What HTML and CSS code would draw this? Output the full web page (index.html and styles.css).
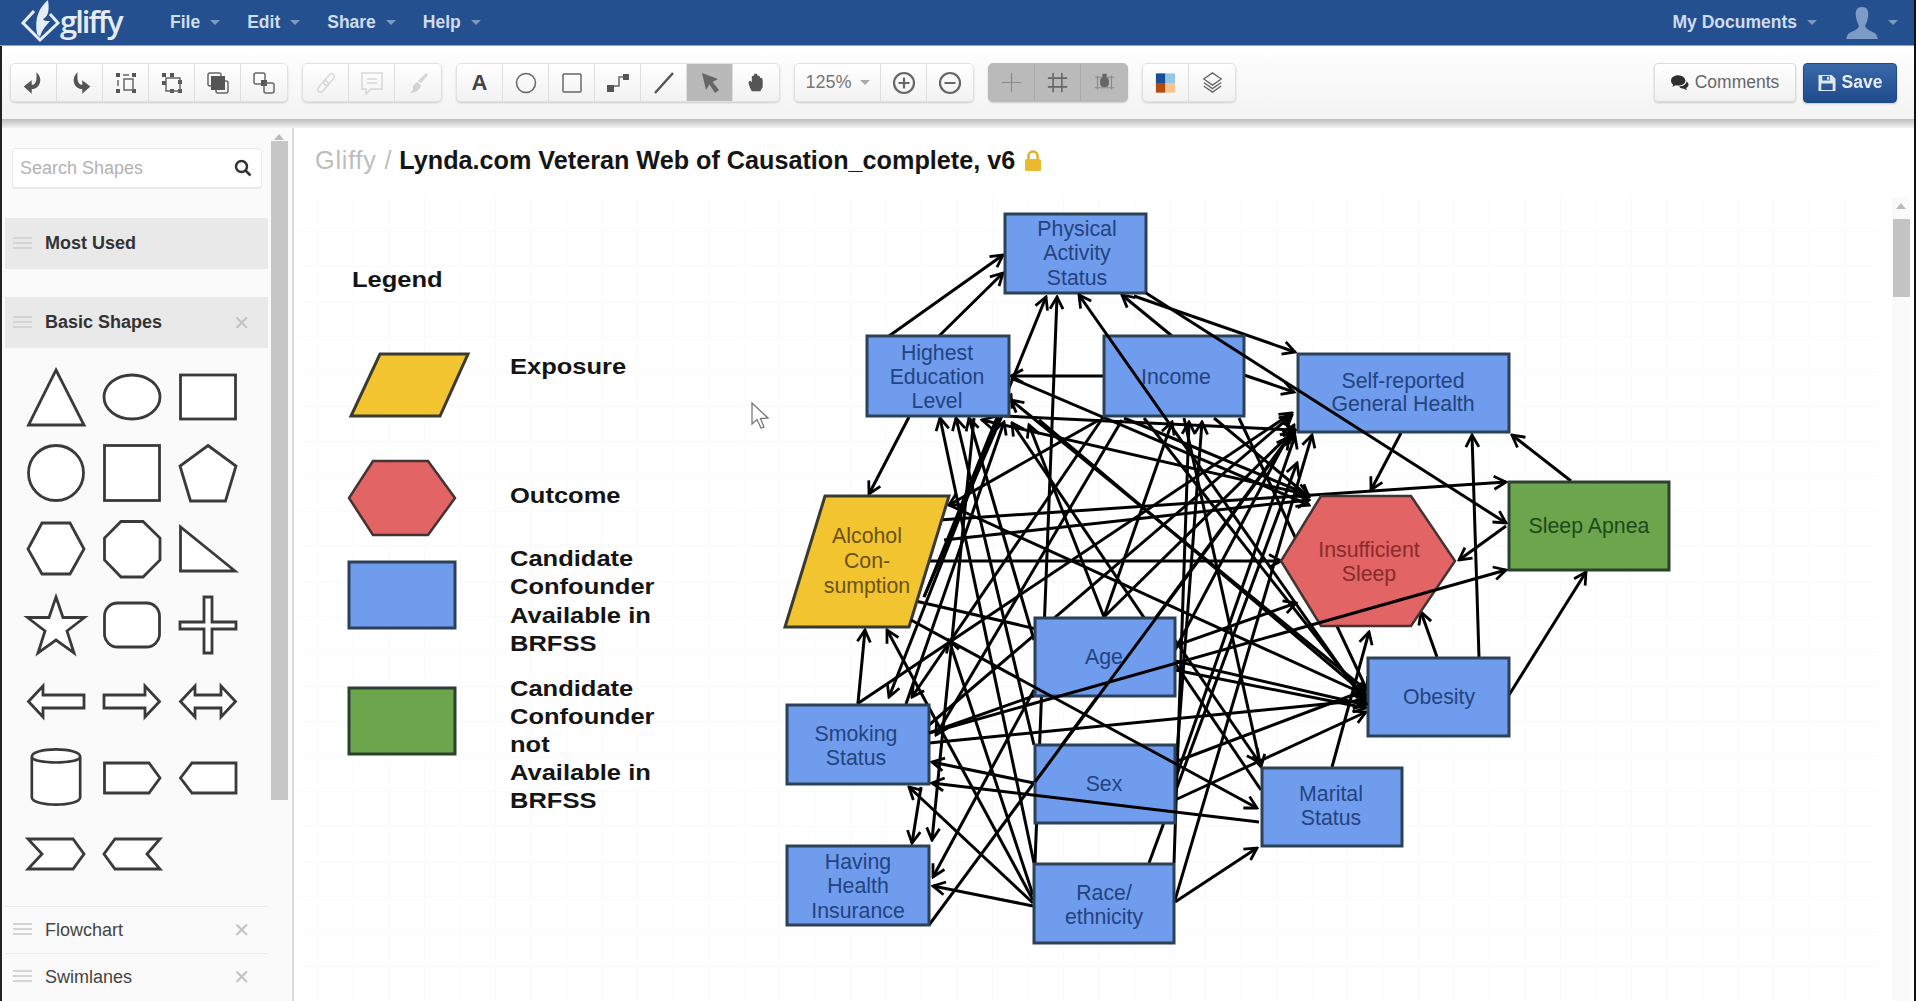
FILE: index.html
```html
<!DOCTYPE html>
<html lang="en">
<head>
<meta charset="utf-8">
<title>Gliffy</title>
<link rel="stylesheet" href="styles.css">
</head>
<body>
<div class="app">
  <header class="topbar">
    <a class="logo">
      <svg class="logo-mark" viewBox="0 0 42 44"><path class="logo-line" d="M14 12 L3 24 L20 41 L38 24 L30 15"/><path class="logo-fill" d="M28 1 C20 8 14 18 17 35 L20 38 C22 30 27 26 30 22 C26 22 24 22 23 20 C27 18 30 14 28 1Z"/></svg>
      <span class="logo-text">gliffy</span>
    </a>
    <nav class="menu">
      <span class="menu-item">File<i class="caret"></i></span>
      <span class="menu-item">Edit<i class="caret"></i></span>
      <span class="menu-item">Share<i class="caret"></i></span>
      <span class="menu-item">Help<i class="caret"></i></span>
    </nav>
    <div class="account">
      <span class="menu-item">My Documents<i class="caret"></i></span>
      <span class="avatar-wrap">
        <svg class="avatar" viewBox="0 0 32 34"><path d="M16 1 C10 1 9 6 10 11 C10.500 15 12 18 13 20 C12 24 6 25 2 28 L0 33 L32 33 L30 28 C26 25 20 24 19 20 C20 18 21.500 15 22 11 C23 6 22 1 16 1Z"/></svg>
        <i class="caret"></i>
      </span>
    </div>
  </header>

  <div class="toolbar">
    <div class="group">
      <button class="tool"><svg class="ic" viewBox="2 2 20 21"><path class="solid" d="M14 3 C18 6 19 12 15 16 C14 17 12 18 10 18 L10 22 L3 15.500 L10 10 L10 14 C13 14 15 11 14 3Z"/></svg></button>
      <button class="tool"><svg class="ic" viewBox="2 2 20 21"><path class="solid" d="M10 3 C6 6 5 12 9 16 C10 17 12 18 14 18 L14 22 L21 15.500 L14 10 L14 14 C11 14 9 11 10 3Z"/></svg></button>
      <button class="tool"><svg class="ic" viewBox="0 0 24 24"><path class="solid" d="M2 2h4v4H2zM18 2h4v4h-4zM2 18h4v4H2zM18 18h4v4h-4z"/><path class="thin" d="M9 4h6M4 9v6M10 8h9v11h-9z"/></svg></button>
      <button class="tool"><svg class="ic" viewBox="0 0 24 24"><path class="solid" d="M2 2h4v4H2zM10 2h4v4h-4zM2 10h4v4H2zM18 9h4v4h-4zM10 18h4v4h-4zM18 18h4v4h-4z"/><path class="thin" d="M6 7h14v13H6z"/></svg></button>
      <button class="tool"><svg class="ic" viewBox="0 0 24 24"><rect class="thin" x="2" y="2" width="13" height="13" rx="2"/><rect class="thin" x="10" y="10" width="12" height="12" rx="2"/><rect class="solid" x="5" y="5" width="14" height="14"/></svg></button>
      <button class="tool"><svg class="ic" viewBox="0 0 24 24"><rect class="thin" x="2" y="2" width="11" height="11" rx="2"/><rect class="solid" x="9" y="9" width="6" height="6"/><rect class="thin" x="12" y="12" width="10" height="10" rx="2"/></svg></button>
    </div>
    <div class="group">
      <button class="tool"><svg class="ic off" viewBox="0 0 24 24"><path class="thin" d="M4 17 L10 10 A3 3 0 0 1 14 14 L8 21 A3 3 0 0 1 4 17ZM20 7 L14 14 A3 3 0 0 1 10 10 L16 3 A3 3 0 0 1 20 7Z"/></svg></button>
      <button class="tool"><svg class="ic off" viewBox="0 0 24 24"><path class="thin" d="M2 2h20v16H11l-5 5v-5H2zM7 8h10M7 12h10"/></svg></button>
      <button class="tool"><svg class="ic off" viewBox="0 0 24 24"><path class="solid" d="M20 2l2 2-7 8-3-2zM11 11l4 3c-1 4-4 8-11 8 3-2 3-4 3-7z"/></svg></button>
    </div>
    <div class="group">
      <button class="tool tool-a">A</button>
      <button class="tool"><svg class="ic" viewBox="0 0 24 24"><circle class="thin" cx="12" cy="12" r="9.500"/></svg></button>
      <button class="tool"><svg class="ic" viewBox="0 0 24 24"><rect class="thin" x="3" y="3" width="18" height="18" rx="1"/></svg></button>
      <button class="tool"><svg class="ic" viewBox="0 0 24 24"><path class="solid" d="M1 14h7v7H1zM17 3h6v6h-6z"/><path class="thin" d="M8 15h5V6h4"/></svg></button>
      <button class="tool"><svg class="ic" viewBox="0 0 24 24"><path class="heavy" d="M3 22 L21 2"/></svg></button>
      <button class="tool tool-on"><svg class="ic" viewBox="0 0 24 24"><path class="cursor-ic" d="M4 2 L20 8 L14.500 11 L21 19 L17 22 L11.500 13.500 L8 19Z"/></svg></button>
      <button class="tool"><svg class="ic ic-hand" viewBox="0 0 24 24"><path class="solid" d="M7 22 C5 18 3 14 3 11 L5 9 L7 11 L7 4 L9.500 3 L10 1 L13 1 L14 3 L16.500 4 L17 6 L19 6 L20 8 L20 17 L17 22Z"/></svg></button>
    </div>
    <div class="group">
      <button class="tool tool-zoom">125%<i class="caret caret-gray"></i></button>
      <button class="tool"><svg class="ic" viewBox="0 0 24 24"><circle class="mid" cx="12" cy="12" r="10"/><path class="mid" d="M6.500 12h11M12 6.500v11"/></svg></button>
      <button class="tool"><svg class="ic" viewBox="0 0 24 24"><circle class="mid" cx="12" cy="12" r="10"/><path class="mid" d="M6.500 12h11"/></svg></button>
    </div>
    <div class="group group-on">
      <button class="tool"><svg class="ic ic-snap" viewBox="0 0 24 24"><path class="snap" d="M12 1v22M1 12h22"/></svg></button>
      <button class="tool"><svg class="ic ic-snap" viewBox="0 0 24 24"><path class="snap-dark" d="M7 1v22M17 1v22M1 7h22M1 17h22"/></svg></button>
      <button class="tool"><svg class="ic ic-snap" viewBox="0 0 24 24"><path class="snap" d="M4 4v16M20 4v16M1 6h22M1 18h22"/><rect class="snap-fill" x="7" y="6" width="10" height="11" rx="4"/><rect class="snap-fill" x="9.500" y="2" width="5" height="4"/></svg></button>
    </div>
    <div class="group">
      <button class="tool"><svg class="ic ic-color" viewBox="0 0 24 24"><rect class="c1" x="1" y="1" width="11" height="11"/><rect class="c2" x="12" y="1" width="11" height="11"/><rect class="c3" x="1" y="12" width="11" height="11"/><rect class="c4" x="12" y="12" width="11" height="11"/></svg></button>
      <button class="tool"><svg class="ic ic-layers" viewBox="0 0 24 24"><path class="thin" d="M12 1 L22 8 L12 15 L2 8Z M2 12 L12 19 L22 12 M2 16 L12 23 L22 16"/></svg></button>
    </div>
    <div class="actions">
      <button class="btn">
        <svg class="btn-ic" viewBox="0 0 20 18"><path class="btn-dark" d="M8 1C3.500 1 0 3.500 0 7c0 2 1 3.500 2.500 4.500L1.500 14l3.500-2c1 .3 2 .4 3 .4 4.500 0 8-2.500 8-5.400S12.500 1 8 1ZM17.500 8c-1 3.500-4.500 5.500-8.500 5.500 1 1.500 3 2.500 5.500 2.500l3 1.500-.5-2.500c1.500-1 2.500-2 2.500-3.500s-1-2.500-2-3.500Z"/></svg>
        Comments
      </button>
      <button class="btn btn-save">
        <svg class="btn-ic" viewBox="0 0 18 18"><path class="btn-light" d="M0 1h14l4 4v13H0ZM4 2v5h8V2ZM9 3h2v3H9ZM3 10v7h12v-7Z"/></svg>
        Save
      </button>
    </div>
  </div>
  <div class="toolbar-shadow"></div>

  <main class="workspace">
    <aside class="sidebar">
      <div class="side-scroll"><i class="tri-up"></i><div class="side-thumb"></div></div>
      <div class="search"><span class="search-text">Search Shapes</span>
        <svg class="search-ic" viewBox="0 0 18 18"><circle cx="7.500" cy="7.500" r="5.500"/><path d="M11.500 11.500 L16.500 16.500"/></svg>
      </div>
      <div class="panel-head panel-first"><span class="handle"></span><b>Most Used</b></div>
      <div class="panel-head panel-second"><span class="handle"></span><b>Basic Shapes</b><span class="x">✕</span></div>
      <div class="shapes">
        <svg viewBox="0 0 58 58"><path d="M29 2 L57 57 L1.500 57Z"/></svg>
        <svg viewBox="0 0 58 58"><ellipse cx="29" cy="29" rx="28" ry="22"/></svg>
        <svg viewBox="0 0 58 58"><rect x="1.500" y="7" width="55" height="44"/></svg>
        <svg viewBox="0 0 58 58"><circle cx="29" cy="29" r="27.500"/></svg>
        <svg viewBox="0 0 58 58"><rect x="1.500" y="1.500" width="55" height="55"/></svg>
        <svg viewBox="0 0 58 58"><path d="M29 1.500 L57 22 L46.500 57 L11.500 57 L1 22Z"/></svg>
        <svg viewBox="0 0 58 58"><path d="M15 3 L43 3 L57 29 L43 54 L15 54 L1 29Z"/></svg>
        <svg viewBox="0 0 58 58"><path d="M18 1.500 L40 1.500 L57 18 L57 40 L40 57 L18 57 L1.500 40 L1.500 18Z"/></svg>
        <svg viewBox="0 0 58 58"><path d="M1.500 7 L1.500 51 L56 51Z"/></svg>
        <svg viewBox="0 0 58 58"><path d="M29 1 L36 21.500 L57.500 21.500 L40 35 L47 57 L29 44 L11 57 L18 35 L0.500 21.500 L22 21.500Z"/></svg>
        <svg viewBox="0 0 58 58"><rect x="1.500" y="7" width="55" height="44" rx="13"/></svg>
        <svg viewBox="0 0 58 58"><path d="M25 1 L33 1 L33 26 L57 26 L57 33 L33 33 L33 57 L25 57 L25 33 L1 33 L1 26 L25 26Z"/></svg>
        <svg viewBox="0 0 58 58"><path d="M1.500 29.500 L16 14 L16 23 L57 23 L57 36 L16 36 L16 45Z"/></svg>
        <svg viewBox="0 0 58 58"><path d="M56.500 29.500 L42 14 L42 23 L1 23 L1 36 L42 36 L42 45Z"/></svg>
        <svg viewBox="0 0 58 58"><path d="M1.500 29.500 L16 14 L16 23 L42 23 L42 14 L56.500 29.500 L42 45 L42 36 L16 36 L16 45Z"/></svg>
        <svg viewBox="0 0 58 60"><path d="M4 9 C4 -1 54 -1 54 9 L54 51 C54 61 4 61 4 51Z M4 9 C4 17 54 17 54 9"/></svg>
        <svg viewBox="0 0 58 58"><path d="M1.500 15 L46 15 L57 30 L46 45 L1.500 45Z"/></svg>
        <svg viewBox="0 0 58 58"><path d="M57 15 L13 15 L1.500 30 L13 45 L57 45Z"/></svg>
        <svg viewBox="0 0 58 58"><path d="M1 15 L46 15 L57 30 L46 45 L1 45 L15 30Z"/></svg>
        <svg viewBox="0 0 58 58"><path d="M57 15 L12 15 L1 30 L12 45 L57 45 L44 30Z"/></svg>
      </div>
      <div class="panel-row"><span class="handle"></span><span class="row-label">Flowchart</span><span class="x">✕</span></div>
      <div class="panel-row"><span class="handle"></span><span class="row-label">Swimlanes</span><span class="x">✕</span></div>
    </aside>

    <section class="canvas">
      <svg class="diagram" viewBox="296 128 1617 873">
        <defs>
          <pattern id="grid" x="0" y="197" width="35.500" height="35" patternUnits="userSpaceOnUse"><path class="grid-line" d="M35.500 0V35M0 35H35.500"/></pattern>
          <marker id="a" viewBox="0 0 16 16" refX="14" refY="8" markerWidth="16" markerHeight="16" markerUnits="userSpaceOnUse" orient="auto"><path class="arrowhead" d="M2 1.500 L14 8 L2 14.500"/></marker>
        </defs>
        <rect class="grid-bg" x="300" y="197" width="1580" height="804"/>

        <polygon class="n-yellow" points="381,354 469,354 441,416 352,416"/>
        <polygon class="n-red" points="374,461 429,461 456,498 429,535 374,535 350,498"/>
        <rect class="n-blue" x="350" y="562" width="106" height="66"/>
        <rect class="n-green" x="350" y="688" width="106" height="66"/>

        <text class="lg" transform="translate(353 287) scale(1.16 1)">Legend</text>
        <text class="lg" transform="translate(511 374) scale(1.16 1)">Exposure</text>
        <text class="lg" transform="translate(511 503) scale(1.16 1)">Outcome</text>
        <text class="lg" transform="translate(511 566) scale(1.16 1)">Candidate</text>
        <text class="lg" transform="translate(511 594) scale(1.16 1)">Confounder</text>
        <text class="lg" transform="translate(511 623) scale(1.16 1)">Available in</text>
        <text class="lg" transform="translate(511 651) scale(1.16 1)">BRFSS</text>
        <text class="lg" transform="translate(511 696) scale(1.16 1)">Candidate</text>
        <text class="lg" transform="translate(511 724) scale(1.16 1)">Confounder</text>
        <text class="lg" transform="translate(511 752) scale(1.16 1)">not</text>
        <text class="lg" transform="translate(511 780) scale(1.16 1)">Available in</text>
        <text class="lg" transform="translate(511 808) scale(1.16 1)">BRFSS</text>

        <path class="cursor" d="M753 403 L753 424 L758 419.500 L762 428 L765 427 L761.500 418.500 L769 418Z"/>

        <g class="edges" marker-end="url(#a)">
          <line x1="890" y1="336" x2="1004" y2="255"/>
          <line x1="940" y1="336" x2="1004" y2="273"/>
          <line x1="1173" y1="336" x2="1123" y2="295"/>
          <line x1="1135" y1="296" x2="1296" y2="352"/>
          <line x1="1105" y1="376" x2="1012" y2="376"/>
          <line x1="1245" y1="375" x2="1295" y2="392"/>
          <line x1="910" y1="417" x2="870" y2="494"/>
          <line x1="1012" y1="378" x2="1310" y2="505"/>
          <line x1="1367" y1="690" x2="1012" y2="400"/>
          <line x1="1262" y1="790" x2="1013" y2="423"/>
          <line x1="1005" y1="416" x2="1296" y2="430"/>
          <line x1="1100" y1="420" x2="950" y2="505"/>
          <line x1="1035" y1="863" x2="941" y2="418"/>
          <line x1="1035" y1="745" x2="957" y2="418"/>
          <line x1="1035" y1="640" x2="970" y2="418"/>
          <line x1="1310" y1="495" x2="983" y2="420"/>
          <line x1="930" y1="561" x2="1282" y2="561"/>
          <line x1="940" y1="520" x2="1507" y2="482"/>
          <line x1="925" y1="597" x2="1047" y2="297"/>
          <line x1="925" y1="597" x2="1012" y2="395"/>
          <line x1="1036" y1="863" x2="1058" y2="297"/>
          <line x1="859" y1="703" x2="866" y2="630"/>
          <line x1="1034" y1="900" x2="888" y2="630"/>
          <line x1="1034" y1="903" x2="910" y2="787"/>
          <line x1="1034" y1="906" x2="934" y2="886"/>
          <line x1="1034" y1="895" x2="950" y2="640"/>
          <line x1="1000" y1="417" x2="890" y2="697"/>
          <line x1="1105" y1="416" x2="913" y2="697"/>
          <line x1="1123" y1="420" x2="937" y2="735"/>
          <line x1="922" y1="787" x2="913" y2="843"/>
          <line x1="975" y1="418" x2="933" y2="840"/>
          <line x1="1035" y1="690" x2="934" y2="877"/>
          <line x1="1035" y1="783" x2="933" y2="762"/>
          <line x1="858" y1="704" x2="1293" y2="413"/>
          <line x1="930" y1="725" x2="1293" y2="415"/>
          <line x1="930" y1="925" x2="1290" y2="437"/>
          <line x1="907" y1="704" x2="1005" y2="422"/>
          <line x1="930" y1="733" x2="1297" y2="603"/>
          <line x1="930" y1="743" x2="1367" y2="700"/>
          <line x1="1176" y1="902" x2="1258" y2="848"/>
          <line x1="1176" y1="900" x2="1313" y2="435"/>
          <line x1="1150" y1="863" x2="1298" y2="463"/>
          <line x1="1175" y1="863" x2="1190" y2="422"/>
          <line x1="1176" y1="780" x2="1203" y2="422"/>
          <line x1="1105" y1="617" x2="1173" y2="422"/>
          <line x1="1105" y1="617" x2="1030" y2="425"/>
          <line x1="1176" y1="640" x2="1260" y2="762"/>
          <line x1="1176" y1="670" x2="1367" y2="708"/>
          <line x1="1176" y1="650" x2="1295" y2="425"/>
          <line x1="1105" y1="617" x2="1294" y2="431"/>
          <line x1="1176" y1="762" x2="1367" y2="690"/>
          <line x1="1176" y1="800" x2="1367" y2="712"/>
          <line x1="1176" y1="780" x2="1296" y2="436"/>
          <line x1="1040" y1="420" x2="1367" y2="695"/>
          <line x1="1125" y1="418" x2="1310" y2="495"/>
          <line x1="1145" y1="418" x2="1367" y2="700"/>
          <line x1="1215" y1="418" x2="1310" y2="497"/>
          <line x1="1185" y1="418" x2="1262" y2="767"/>
          <line x1="1240" y1="418" x2="1368" y2="690"/>
          <line x1="912" y1="600" x2="1367" y2="705"/>
          <line x1="945" y1="540" x2="1310" y2="500"/>
          <line x1="950" y1="505" x2="1367" y2="695"/>
          <line x1="1333" y1="767" x2="1370" y2="632"/>
          <line x1="1402" y1="433" x2="1372" y2="490"/>
          <line x1="1572" y1="481" x2="1513" y2="435"/>
          <line x1="1480" y1="657" x2="1473" y2="435"/>
          <line x1="1507" y1="526" x2="1460" y2="560"/>
          <line x1="1510" y1="695" x2="1587" y2="572"/>
          <line x1="1438" y1="657" x2="1422" y2="612"/>
        </g>

        <rect class="n-blue" x="1006" y="214" width="141" height="79"/>
        <rect class="n-blue" x="868" y="336" width="142" height="80"/>
        <rect class="n-blue" x="1105" y="336" width="140" height="80"/>
        <rect class="n-blue" x="1299" y="354" width="211" height="78"/>
        <polygon class="n-yellow" points="826,496 950,496 910,627 786,627"/>
        <polygon class="n-red" points="1322,496 1412,496 1456,561 1412,626 1322,626 1282,561"/>
        <rect class="n-green" x="1510" y="482" width="160" height="88"/>
        <rect class="n-blue" x="1036" y="618" width="140" height="78"/>
        <rect class="n-blue" x="1036" y="745" width="140" height="78"/>
        <rect class="n-blue" x="1369" y="658" width="141" height="78"/>
        <rect class="n-blue" x="1263" y="768" width="140" height="78"/>
        <rect class="n-blue" x="788" y="705" width="142" height="79"/>
        <rect class="n-blue" x="788" y="846" width="142" height="79"/>
        <rect class="n-blue" x="1035" y="864" width="140" height="79"/>

        <g class="edges" marker-end="url(#a)">
          <line x1="1147" y1="293" x2="1507" y2="523"/>
          <line x1="1368" y1="705" x2="1080" y2="295"/>
          <line x1="930" y1="733" x2="1507" y2="570"/>
          <line x1="1036" y1="782" x2="1296" y2="430"/>
          <line x1="912" y1="620" x2="1258" y2="808"/>
          <line x1="1260" y1="822" x2="933" y2="783"/>
        </g>

        <g class="t t-blue">
          <text x="1078" y="236">Physical</text><text x="1078" y="260">Activity</text><text x="1078" y="285">Status</text>
          <text x="938" y="360">Highest</text><text x="938" y="384">Education</text><text x="938" y="408">Level</text>
          <text x="1177" y="384">Income</text>
          <text x="1404" y="388">Self-reported</text><text x="1404" y="411">General Health</text>
          <text x="1440" y="704">Obesity</text>
          <text x="1105" y="664">Age</text>
          <text x="1105" y="791">Sex</text>
          <text x="857" y="741">Smoking</text><text x="857" y="765">Status</text>
          <text x="859" y="869">Having</text><text x="859" y="893">Health</text><text x="859" y="918">Insurance</text>
          <text x="1105" y="900">Race/</text><text x="1105" y="924">ethnicity</text>
          <text x="1332" y="801">Marital</text><text x="1332" y="825">Status</text>
        </g>
        <g class="t t-yellow"><text x="868" y="543">Alcohol</text><text x="868" y="568">Con-</text><text x="868" y="593">sumption</text></g>
        <g class="t t-red"><text x="1370" y="557">Insufficient</text><text x="1370" y="581">Sleep</text></g>
        <g class="t t-green"><text x="1590" y="533">Sleep Apnea</text></g>
      </svg>
      <h1 class="title"><span class="crumb">Gliffy /</span> Lynda.com Veteran Web of Causation_complete, v6
        <svg class="lock" viewBox="0 0 18 21"><path class="lock-arc" d="M4.500 10V6a4.500 4.500 0 0 1 9 0v4"/><rect class="lock-body" x="1" y="9" width="16" height="12" rx="1.500"/></svg>
      </h1>
      <div class="canvas-scroll"><i class="tri-up"></i><div class="canvas-thumb"></div></div>
    </section>
  </main>
</div>
</body>
</html>
```

FILE: styles.css
```css
* { box-sizing: border-box; }
html, body { margin: 0; height: 100%; overflow: hidden; background: #fff; }
body { font-family: "Liberation Sans", Arial, sans-serif; }
.app { width: 1916px; height: 1001px; display: flex; flex-direction: column; border-right: 2px solid #111; filter: blur(0.55px); }

.topbar { height: 46px; flex: none; background: #24508f; border-bottom: 1px solid #7fb0b8; display: flex; align-items: center; padding: 0 16px 0 20px; color: #cfdcef; }
.logo { display: flex; align-items: center; width: 150px; }
.logo-mark { width: 42px; height: 44px; margin-top: -4px; flex: none; }
.logo-line { fill: none; stroke: #e6edf7; stroke-width: 3; }
.logo-fill { fill: #e6edf7; }
.logo-text { font-family: "Open Sans", sans-serif; font-weight: 600; font-size: 31px; letter-spacing: -2px; color: #e4ecf7; margin-left: -2px; margin-top: -3px; }
.menu { display: flex; gap: 27px; }
.menu-item { font-weight: 700; font-size: 17.500px; display: inline-flex; align-items: center; }
.caret { display: inline-block; width: 0; height: 0; margin-left: 10px; border: 5px solid transparent; border-top-color: #7e9ac2; border-bottom: 0; }
.caret-gray { border-top-color: #aaa; }
.account { margin-left: auto; display: flex; align-items: center; gap: 29px; }
.avatar-wrap { display: inline-flex; align-items: center; }
.avatar { width: 32px; height: 34px; fill: #7d9bc7; }

.toolbar { height: 73px; flex: none; display: flex; align-items: center; gap: 14px; padding: 0 17px 0 8px; background: linear-gradient(#fff, #f3f3f3); border-left: 2px solid #222; }
.toolbar-shadow { height: 9px; flex: none; background: linear-gradient(#bdbdbd, #f1f1f1); border-left: 2px solid #222; }
.group { display: flex; height: 39px; border: 1px solid #e2e2e2; border-radius: 5px; box-shadow: 0 1px 2px rgba(0,0,0,.18); overflow: hidden; background: linear-gradient(#fff, #f2f2f2); }
.tool { width: 46px; height: 100%; padding: 0; border: 0; border-right: 1px solid #dedede; background: transparent; display: flex; align-items: center; justify-content: center; font-family: inherit; }
.tool:last-child { border-right: 0; }
.tool-on { background: #b9b9b9; }
.group-on { background: #bababa; border-color: #bababa; }
.group-on .tool { border-right-color: #a9a9a9; }
.tool-a { font-weight: 700; font-size: 22px; color: #444; }
.tool-zoom { width: 86px; font-size: 18px; color: #777; }
.tool-zoom .caret { margin-left: 8px; }
.ic { width: 24px; height: 24px; }
.ic-hand { width: 20px; height: 22px; }
.ic-snap { width: 21px; height: 21px; }
.ic-color { width: 21px; height: 22px; }
.ic-layers { width: 21px; height: 23px; }
.off { opacity: .22; }
.solid { fill: #555; }
.cursor-ic { fill: #666; }
.thin { fill: none; stroke: #666; stroke-width: 1.500; }
.mid { fill: none; stroke: #666; stroke-width: 2.200; }
.heavy { fill: none; stroke: #555; stroke-width: 2.500; }
.snap { fill: none; stroke: #8a8a8a; stroke-width: 1.300; }
.snap-dark { fill: none; stroke: #666; stroke-width: 1.800; }
.snap-fill { fill: #666; }
.c1 { fill: #174f96; }
.c2 { fill: #94c6e8; }
.c3 { fill: #b24c08; }
.c4 { fill: #f6c48c; }
.actions { margin-left: auto; display: flex; gap: 7px; }
.btn { height: 39px; width: 142px; border: 1px solid #dcdcdc; border-radius: 4px; background: linear-gradient(#fff, #f1f1f1); box-shadow: 0 1px 2px rgba(0,0,0,.2); font-family: inherit; font-size: 17.500px; color: #666; display: flex; align-items: center; justify-content: center; gap: 6px; padding: 0; }
.btn-save { width: 94px; height: 40px; color: #e6edf7; font-weight: 700; background: linear-gradient(#3a68a8, #1f4b8c); border-color: #1f4b8c; }
.btn-ic { width: 18px; height: 17px; }
.btn-dark { fill: #2e2e2e; }
.btn-light { fill: #dfe7f3; fill-rule: evenodd; }

.workspace { flex: 1; min-height: 0; display: flex; border-left: 2px solid #222; }
.sidebar { width: 292px; flex: none; position: relative; background: #fafafa; border-right: 2px solid #dcdcdc; padding: 20px 0 0 3px; display: flex; flex-direction: column; }
.side-scroll { position: absolute; left: 268px; top: 0; width: 18px; height: 672px; display: flex; flex-direction: column; align-items: center; }
.tri-up { width: 0; height: 0; margin-top: 6px; border: 5px solid transparent; border-bottom: 6px solid #bbb; border-top: 0; flex: none; }
.side-thumb { flex: 1; width: 17px; margin-top: 1px; background: #c6c6c6; }
.search { width: 250px; height: 40px; margin-left: 7px; background: #fff; border: 1px solid #e8e8e8; border-radius: 3px; box-shadow: 0 1px 1px rgba(0,0,0,.06); display: flex; align-items: center; justify-content: space-between; padding: 0 9px 0 7px; }
.search-text { color: #b2b2b2; font-size: 18px; }
.search-ic { width: 18px; height: 18px; fill: none; stroke: #333; stroke-width: 2.500; }
.panel-head { width: 263px; height: 51px; background: #e9e9ea; display: flex; align-items: center; padding-left: 8px; color: #333; font-size: 18px; position: relative; }
.panel-first { margin-top: 30px; }
.panel-second { margin-top: 28px; }
.handle { width: 19px; height: 14px; margin-right: 13px; flex: none; background: repeating-linear-gradient(#d4d4d4 0 2px, transparent 2px 5px); }
.x { margin-left: auto; margin-right: 18px; color: #c2c2c2; font-size: 20px; font-family: "DejaVu Sans", sans-serif; }
.shapes { display: grid; grid-template-columns: repeat(3, 58px); grid-auto-rows: 58px; gap: 18px; padding: 20px 0 0 22px; height: 558px; flex: none; }
.shapes svg { width: 58px; height: 58px; overflow: visible; }
.shapes path, .shapes rect, .shapes circle, .shapes ellipse { fill: #fff; stroke: #3a3a3a; stroke-width: 2.800; }
.panel-row { width: 263px; height: 47px; flex: none; border-top: 1px solid #eaeaea; display: flex; align-items: center; padding-left: 8px; font-size: 18px; color: #444; }

.canvas { flex: 1; min-width: 0; position: relative; background: #fff; margin-left: 1px; }
.diagram { position: absolute; left: 0; top: 0; width: 1617px; height: 873px; display: block; }
.grid-bg { fill: url(#grid); }
.grid-line { fill: none; stroke: #f5f5fb; stroke-width: 1; }
.title { position: relative; margin: 0; padding: 18px 0 0 20px; font-size: 25.200px; line-height: 28px; font-weight: 700; color: #151515; display: flex; align-items: center; gap: 7px; }
.crumb { font-weight: 400; color: #bdbdbd; letter-spacing: .8px; }
.lock { width: 18px; height: 21px; margin-left: 2px; }
.lock-arc { fill: none; stroke: #e2ad2a; stroke-width: 2.500; }
.lock-body { fill: #edb92f; }
.canvas-scroll { position: absolute; left: 1597px; top: 69px; width: 18px; height: 804px; background: #fafafa; display: flex; flex-direction: column; align-items: center; }
.canvas-thumb { width: 17px; height: 78px; margin-top: 10px; background: #c4c4c4; }

.edges line { stroke: #000; stroke-width: 3; }
.arrowhead { fill: none; stroke: #000; stroke-width: 2.800; }
.n-blue { fill: #6f9ced; stroke: #2b4157; stroke-width: 3; }
.n-yellow { fill: #f2c42f; stroke: #3a3a30; stroke-width: 3; }
.n-red { fill: #e26464; stroke: #433; stroke-width: 2.500; }
.n-green { fill: #6ca54b; stroke: #2c4030; stroke-width: 3; }
.t { font-size: 21.300px; text-anchor: middle; }
.t-blue { fill: #24437f; }
.t-yellow { fill: #6b5210; }
.t-red { fill: #8a2b2b; }
.t-green { fill: #1d4a1c; }
.lg { font-size: 22px; font-weight: 700; fill: #151515; }
.cursor { fill: #fff; stroke: #777; stroke-width: 1.300; }
```
